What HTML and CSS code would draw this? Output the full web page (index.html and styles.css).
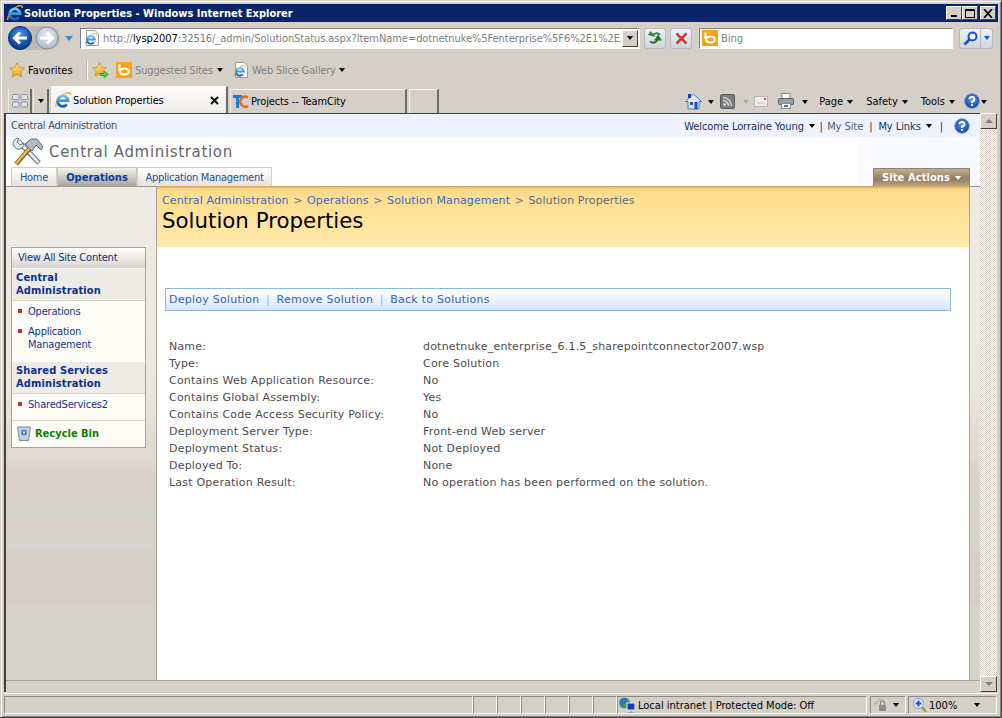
FILE: index.html
```html
<!DOCTYPE html>
<html lang="en">

<head>
    <meta charset="UTF-8">
    <title>Solution Properties - Windows Internet Explorer</title>
    <link rel="stylesheet" href="styles.css">
</head>

<body>
    <svg class="defs" width="0" height="0">
        <defs>
            <linearGradient id="ieBlue" x1="0" y1="0" x2="0" y2="1">
                <stop offset="0" stop-color="#6fc3f5" />
                <stop offset="1" stop-color="#0f62b8" />
            </linearGradient>
            <radialGradient id="backBlue" cx="0.5" cy="0.35" r="0.7">
                <stop offset="0" stop-color="#4f9be8" />
                <stop offset="0.55" stop-color="#1559b8" />
                <stop offset="1" stop-color="#0b2f78" />
            </radialGradient>
            <radialGradient id="foreGrey" cx="0.5" cy="0.35" r="0.7">
                <stop offset="0" stop-color="#e6edf6" />
                <stop offset="1" stop-color="#a8b4c6" />
            </radialGradient>
            <linearGradient id="starGold" x1="0" y1="0" x2="0" y2="1">
                <stop offset="0" stop-color="#ffe98a" />
                <stop offset="1" stop-color="#f0a41c" />
            </linearGradient>
            <radialGradient id="helpBlue" cx="0.5" cy="0.4" r="0.6">
                <stop offset="0" stop-color="#5c9cf0" />
                <stop offset="1" stop-color="#123f9c" />
            </radialGradient>
            <symbol id="ie" viewBox="0 0 16 16">
                <path d="M1 15C-.5 12 5 4 10 1.500 13 0 15.500 .5 15.500 3" fill="none" stroke="#f0a92c" stroke-width="1.300" />
                <path d="M2.500 8.700H13A5.200 5.200 0 1 0 11.800 12.500" fill="none" stroke="url(#ieBlue)" stroke-width="2.800" />
            </symbol>
            <symbol id="bing" viewBox="0 0 16 16">
                <rect width="16" height="16" fill="#f7a21b" />
                <ellipse cx="8.500" cy="9.500" rx="4.400" ry="3" fill="none" stroke="#fff" stroke-width="2.200" />
                <path d="M3.500 2.500V9" stroke="#fff" stroke-width="2.200" />
            </symbol>
            <symbol id="page" viewBox="0 0 16 16">
                <path d="M2.500 .5H11L14.500 4V15.500H2.500Z" fill="#fff" stroke="#9a9a9a" />
                <use href="#ie" x="1" y="3" width="12" height="12" />
            </symbol>
            <symbol id="star" viewBox="0 0 16 16">
                <path d="M8 .8L10.200 5.600 15.400 6.200 11.500 9.700 12.600 14.900 8 12.300 3.400 14.900 4.500 9.700 .6 6.200 5.800 5.600Z" fill="url(#starGold)" stroke="#c98a18" stroke-width=".8" />
            </symbol>
        </defs>
    </svg>

    <div class="window">
        <div class="titlebar">
            <svg class="title-icon"><use href="#ie" /></svg>
            <span class="title-text">Solution Properties - Windows Internet Explorer</span>
            <div class="win-buttons">
                <span class="win-btn"><i class="win-min"></i></span>
                <span class="win-btn"><i class="win-max"></i></span>
                <span class="win-btn win-close">
                    <svg width="10" height="9" viewBox="0 0 10 9"><path d="M1 0L9 9M9 0L1 9" stroke="#000" stroke-width="1.700" /></svg>
                </span>
            </div>
        </div>

        <div class="navrow">
            <div class="backfwd">
                <svg width="24" height="24" viewBox="0 0 24 24">
                    <circle cx="12" cy="12" r="11.500" fill="url(#backBlue)" stroke="#0b2f78" />
                    <path d="M19 12H7M12 6.500L6.500 12 12 17.500" fill="none" stroke="#fff" stroke-width="3" />
                </svg>
                <svg class="fwd" width="24" height="24" viewBox="0 0 24 24">
                    <circle cx="12" cy="12" r="11" fill="url(#foreGrey)" stroke="#8a8f98" />
                    <path d="M5 12H17M12 6.500L17.500 12 12 17.500" fill="none" stroke="#fff" stroke-width="3" />
                </svg>
            </div>
            <i class="nav-caret"></i>
            <div class="address">
                <svg class="addr-icon"><use href="#page" /></svg>
                <span class="addr-text">http://<b>lysp2007</b>:32516/_admin/SolutionStatus.aspx?ItemName=dotnetnuke%5Fenterprise%5F6%2E1%2E</span>
                <span class="addr-drop"><i class="caret"></i></span>
            </div>
            <span class="glass-btn refresh">
                <svg width="16" height="16" viewBox="0 0 16 16">
                    <path d="M13 5C10.500 2.500 7.500 3 5.500 5.500" fill="none" stroke="#2a8a2a" stroke-width="2" />
                    <path d="M1 5L8.500 7 3.500 1Z" fill="#2a8a2a" />
                    <path d="M3 11.500C6 13.500 9.500 13 10.500 9.500" fill="none" stroke="#1f7a1f" stroke-width="2" />
                    <path d="M7 10.500H15L11 4.500Z" fill="#1f7a1f" />
                </svg>
            </span>
            <span class="glass-btn stop">
                <svg width="13" height="13" viewBox="0 0 13 13"><path d="M1.500 1.500L11.500 11.500M11.500 1.500L1.500 11.500" stroke="#c4403c" stroke-width="2.600" /></svg>
            </span>
            <div class="search">
                <svg class="search-icon"><use href="#bing" /></svg>
                <span>Bing</span>
            </div>
            <div class="search-btn">
                <span class="search-go">
                    <svg width="15" height="15" viewBox="0 0 15 15">
                        <circle cx="9.500" cy="5.500" r="4" fill="#e8f2ff" stroke="#1d4fc4" stroke-width="2" />
                        <path d="M6.500 8.500L1.500 13.500" stroke="#1d4fc4" stroke-width="2.600" />
                    </svg>
                </span>
                <span class="search-drop"><i class="caret caret-blue"></i></span>
            </div>
        </div>

        <div class="favrow">
            <svg class="fav-star"><use href="#star" /></svg>
            <span class="fav-label">Favorites</span>
            <i class="fav-sep"></i>
            <svg class="fav-add" viewBox="0 0 17 17">
                <use href="#star" width="15" height="15" />
                <path d="M8 11.500H12V9L16.500 12.500 12 16V13.500H8Z" fill="#62c23c" stroke="#2c8a1c" stroke-width=".6" />
            </svg>
            <svg class="fav-bing"><use href="#bing" /></svg>
            <span class="fav-link fav-sites">Suggested Sites</span>
            <i class="caret caret-sites"></i>
            <svg class="fav-page"><use href="#page" /></svg>
            <span class="fav-link fav-slice">Web Slice Gallery</span>
            <i class="caret caret-slice"></i>
        </div>

        <div class="tabrow">
            <span class="tab-tool quick">
                <svg width="16" height="14" viewBox="0 0 16 14">
                    <rect x=".5" y=".5" width="6.500" height="5" rx="1" fill="#dfe4ee" stroke="#8a92a6" />
                    <rect x="9" y=".5" width="6.500" height="5" rx="1" fill="#dfe4ee" stroke="#8a92a6" />
                    <rect x=".5" y="8" width="6.500" height="5" rx="1" fill="#dfe4ee" stroke="#8a92a6" />
                    <rect x="9" y="8" width="6.500" height="5" rx="1" fill="#dfe4ee" stroke="#8a92a6" />
                </svg>
            </span>
            <span class="tab-tool tablist"><i class="caret"></i></span>
            <div class="tab tab-active">
                <svg class="tab-icon"><use href="#ie" /></svg>
                <span class="tab-title">Solution Properties</span>
                <svg class="tab-close" width="9" height="9" viewBox="0 0 9 9"><path d="M1 1L8 8M8 1L1 8" stroke="#000" stroke-width="2" /></svg>
            </div>
            <div class="tab tab-other">
                <svg class="tab-icon" viewBox="0 0 16 16">
                    <path d="M0 1H9V4H6V14H3V4H0Z" fill="#1a7fd8" />
                    <path d="M15 3.500A5 5 0 1 0 15 12" fill="none" stroke="#f0642c" stroke-width="2.600" />
                </svg>
                <span class="tab-title">Projects -- TeamCity</span>
            </div>
            <div class="tab tab-new"></div>
            <div class="tools">
                <svg class="tool-home" viewBox="0 0 17 17">
                    <path d="M8.500 1L16.500 8.500H14V16H3V8.500H.5Z" fill="#dbe7f7" stroke="#4d77b8" />
                    <rect x="3" y="1" width="3" height="4" fill="#1c3fa8" />
                    <rect x="9.500" y="9" width="3" height="7" fill="#1c50a8" />
                    <rect x="5" y="9" width="3" height="3" fill="#33507c" />
                </svg>
                <i class="caret caret-home"></i>
                <svg class="tool-rss" viewBox="0 0 15 15">
                    <rect x=".5" y=".5" width="14" height="14" rx="1.500" fill="#7a7a7a" stroke="#5c5c5c" />
                    <circle cx="4.500" cy="10.500" r="1.500" fill="#d8d8d8" />
                    <path d="M3 6.500A5.500 5.500 0 0 1 8.500 12M3 3.500A8.500 8.500 0 0 1 11.500 12" fill="none" stroke="#d8d8d8" stroke-width="1.500" />
                </svg>
                <i class="caret caret-rss"></i>
                <svg class="tool-mail" viewBox="0 0 14 11">
                    <rect x=".5" y=".5" width="13" height="10" fill="#f0eeea" stroke="#b5b5b5" />
                    <path d="M3 7H10" stroke="#b8b8b8" />
                    <rect x="10" y="2" width="2" height="2" fill="#d84848" />
                </svg>
                <svg class="tool-print" viewBox="0 0 16 16">
                    <rect x="4" y=".5" width="8" height="5" fill="#fff" stroke="#8a8a8a" />
                    <rect x=".5" y="5.500" width="15" height="6" rx="1" fill="#9aa0a6" stroke="#5c6066" />
                    <rect x="3.500" y="10.500" width="9" height="5" fill="#fff" stroke="#8a8a8a" />
                    <rect x="6" y="12" width="4" height="2" fill="#2a8a9c" />
                </svg>
                <i class="caret caret-print"></i>
                <span class="tool-label label-page">Page</span><i class="caret"></i>
                <span class="tool-label label-safety">Safety</span><i class="caret"></i>
                <span class="tool-label label-tools">Tools</span><i class="caret"></i>
                <svg class="tool-help" viewBox="0 0 16 16">
                    <circle cx="8" cy="8" r="7.500" fill="url(#helpBlue)" stroke="#8ca4cc" />
                    <path d="M5.500 6A2.500 2.300 0 1 1 8 8.500V10" fill="none" stroke="#fff" stroke-width="1.800" />
                    <rect x="7" y="11" width="2" height="2" fill="#fff" />
                </svg>
                <i class="caret caret-help"></i>
            </div>
        </div>

        <div class="main">
            <div class="frame">
                <div class="page">
                    <div class="globalbar">
                        <span class="site-name">Central Administration</span>
                        <div class="global-links">
                            <span>Welcome Lorraine Young</span><i class="caret caret-welcome"></i>
                            <span class="bar bar-a">|</span>
                            <span class="mysite">My Site</span>
                            <span class="bar bar-b">|</span>
                            <span>My Links</span><i class="caret caret-welcome"></i>
                            <span class="bar bar-c">|</span>
                            <svg class="global-help" viewBox="0 0 16 16">
                                <circle cx="8" cy="8" r="7.200" fill="url(#helpBlue)" stroke="#5a8ad8" />
                                <path d="M5.500 6A2.500 2.300 0 1 1 8 8.500V10" fill="none" stroke="#fff" stroke-width="1.800" />
                                <rect x="7" y="11" width="2" height="2" fill="#fff" />
                            </svg>
                        </div>
                    </div>

                    <div class="header">
                        <div class="header-top">
                            <svg class="logo" viewBox="0 0 32 28">
                                <path d="M6 3L27 25" stroke="#6d7480" stroke-width="5" />
                                <path d="M6.500 3L26.500 24.500" stroke="#f0f2f5" stroke-width="2.600" />
                                <path d="M1 7A6 6 0 0 1 7 0L5 4 8 7 12 5A6 6 0 0 1 4.500 11Z" fill="#e2e6ea" stroke="#6d7480" />
                                <path d="M4 26L19 9" stroke="#8a6a20" stroke-width="4.600" />
                                <path d="M4 25.500L18.500 9" stroke="#e0bc5c" stroke-width="2.400" />
                                <path d="M13 6L19 1H25L31 9 29 12 24 7 20 13Z" fill="#b4bac2" stroke="#626a74" />
                            </svg>
                            <span class="site-title">Central Administration</span>
                        </div>
                        <div class="header-tabs">
                            <div class="topnav">
                                <span class="topnav-tab nav-home">Home</span>
                                <span class="topnav-tab topnav-on">Operations</span>
                                <span class="topnav-tab nav-app">Application Management</span>
                            </div>
                            <span class="site-actions">Site Actions<i class="caret caret-white"></i></span>
                        </div>
                    </div>

                    <div class="body-row">
                        <aside class="sidebar">
                            <div class="quicklaunch">
                                <div class="ql-all">View All Site Content</div>
                                <div class="ql-head">Central<br>Administration</div>
                                <ul class="ql-list ql-list-first">
                                    <li>Operations</li>
                                    <li>Application<br>Management</li>
                                </ul>
                                <div class="ql-head">Shared Services<br>Administration</div>
                                <ul class="ql-list ql-list-second">
                                    <li>SharedServices2</li>
                                </ul>
                                <div class="ql-bin">
                                    <svg width="14" height="15" viewBox="0 0 14 15">
                                        <path d="M.5 1H13.500L11.500 14.500H2.500Z" fill="#c4d2e0" stroke="#7c8a98" />
                                        <rect x="4.500" y="4" width="5" height="5" fill="#3a6cc0" />
                                        <rect x="6" y="5.500" width="2" height="2" fill="#fff" />
                                    </svg>
                                    <span>Recycle Bin</span>
                                </div>
                            </div>
                        </aside>

                        <div class="content">
                            <div class="titlearea">
                                <div class="breadcrumb">
                                    <span>Central Administration</span><em>&gt;</em><span>Operations</span><em>&gt;</em><span>Solution Management</span><em>&gt;</em><span class="crumb-current">Solution Properties</span>
                                </div>
                                <h1>Solution Properties</h1>
                            </div>
                            <div class="actions">
                                <span>Deploy Solution</span><em>|</em><span>Remove Solution</span><em>|</em><span>Back to Solutions</span>
                            </div>
                            <dl class="props">
                                <dt>Name:</dt><dd>dotnetnuke_enterprise_6.1.5_sharepointconnector2007.wsp</dd>
                                <dt>Type:</dt><dd>Core Solution</dd>
                                <dt>Contains Web Application Resource:</dt><dd>No</dd>
                                <dt>Contains Global Assembly:</dt><dd>Yes</dd>
                                <dt>Contains Code Access Security Policy:</dt><dd>No</dd>
                                <dt>Deployment Server Type:</dt><dd>Front-end Web server</dd>
                                <dt>Deployment Status:</dt><dd>Not Deployed</dd>
                                <dt>Deployed To:</dt><dd>None</dd>
                                <dt>Last Operation Result:</dt><dd>No operation has been performed on the solution.</dd>
                            </dl>
                        </div>
                        <div class="rightgutter"></div>
                    </div>
                </div>
            </div>
            <div class="scrollbar">
                <span class="scroll-btn"><i class="scroll-up"></i></span>
                <span class="scroll-btn"><i class="scroll-down"></i></span>
            </div>
        </div>

        <div class="statusbar">
            <span class="cell cell-main"></span>
            <span class="cell cell-small"></span>
            <span class="cell cell-small"></span>
            <span class="cell cell-small"></span>
            <span class="cell cell-small"></span>
            <span class="cell cell-small"></span>
            <span class="cell cell-small"></span>
            <span class="cell cell-zone">
                <svg width="18" height="16" viewBox="0 0 18 16">
                    <circle cx="6.500" cy="6" r="5.500" fill="#3f9c58" />
                    <path d="M3 2L8 1 10 5 6 7 5 10 2 7Z" fill="#2a78c8" />
                    <rect x="9" y="6" width="8" height="7" fill="#1c3fa8" stroke="#dfe6f2" />
                    <path d="M13 13V15M10 15.500H16" stroke="#9aa4b4" />
                </svg>
                <span>Local intranet | Protected Mode: Off</span>
            </span>
            <span class="cell cell-lock">
                <svg width="16" height="16" viewBox="0 0 16 16">
                    <path d="M1 8L7 2 9 4" fill="none" stroke="#b8b8b8" stroke-width="2" />
                    <rect x="6" y="8" width="7" height="6" fill="#8c8c8c" />
                    <path d="M7.500 8V6A2 2 0 0 1 11.500 6V8" fill="none" stroke="#8c8c8c" stroke-width="1.300" />
                </svg>
                <i class="caret caret-lock"></i>
            </span>
            <span class="cell cell-zoom">
                <svg width="14" height="15" viewBox="0 0 14 15">
                    <circle cx="5.500" cy="5.500" r="5" fill="#e6f0fc" stroke="#7a9cc8" />
                    <path d="M2.500 5.500H8.500M5.500 2.500V8.500" stroke="#1c50c8" stroke-width="2" />
                    <path d="M9 9L13 14" stroke="#b08a50" stroke-width="2.200" />
                </svg>
                <span>100%</span>
                <i class="caret caret-zoom"></i>
            </span>
        </div>
    </div>
</body>

</html>
```

FILE: styles.css
```css
* {
    box-sizing: border-box;
}

html,
body {
    margin: 0;
    padding: 0;
    overflow: hidden;
}

body {
    width: 1002px;
    height: 718px;
    font-family: "DejaVu Sans", Verdana, sans-serif;
    font-size: 11px;
}

.defs {
    position: absolute;
}

i,
em {
    font-style: normal;
}

.window {
    width: 1002px;
    height: 718px;
    padding: 4px 4px 3px;
    background-color: #d4d0c8;
    box-shadow: inset -1px -1px 0 #404040, inset 1px 1px 0 #d4d0c8, inset 2px 2px 0 #fff, inset -2px -2px 0 #808080;
    display: flex;
    flex-direction: column;
    font-stretch: condensed;
    color: #000;
}

.caret {
    display: inline-block;
    flex: none;
    width: 0;
    height: 0;
    border-left: 3.5px solid transparent;
    border-right: 3.5px solid transparent;
    border-top: 4px solid #000;
}

/* title bar */
.titlebar {
    height: 18px;
    background-color: #0a246a;
    display: flex;
    align-items: center;
    color: #fff;
    flex: none;
}

.title-icon {
    width: 16px;
    height: 16px;
    margin-left: 3px;
}

.title-text {
    margin-left: 1px;
    font-weight: bold;
    font-size: 11px;
}

.win-buttons {
    margin-left: auto;
    margin-right: 2px;
    display: flex;
}

.win-btn {
    width: 16px;
    height: 14px;
    background-color: #d4d0c8;
    border: 1px solid;
    border-color: #fff #404040 #404040 #fff;
    display: flex;
    align-items: center;
    justify-content: center;
}

.win-close {
    margin-left: 2px;
}

.win-min {
    width: 6px;
    height: 2px;
    background-color: #000;
    margin-top: 6px;
}

.win-max {
    width: 10px;
    height: 9px;
    border: 1px solid #000;
    border-top-width: 2px;
}

/* navigation row */
.navrow {
    height: 28px;
    margin-top: 2px;
    display: flex;
    align-items: center;
    flex: none;
}

.backfwd {
    display: flex;
    margin-left: 4px;
    height: 24px;
    background-color: #bdbab4;
    border-radius: 12px;
    width: 52px;
}

.fwd {
    margin-left: 3px;
}

.nav-caret {
    width: 0;
    height: 0;
    margin-left: 5px;
    border-left: 4px solid transparent;
    border-right: 4px solid transparent;
    border-top: 5px solid #3f8ac4;
}

.address {
    width: 560px;
    height: 21px;
    margin-left: 7px;
    background-color: #fff;
    border: 1px solid;
    border-color: #808080 #fff #fff #808080;
    display: flex;
    align-items: center;
}

.addr-icon {
    width: 16px;
    height: 16px;
    margin-left: 3px;
    flex: none;
}

.addr-text {
    margin-left: 3px;
    color: #808080;
    white-space: nowrap;
    flex: 1;
    letter-spacing: -0.06px;
}

.addr-text b {
    font-weight: normal;
    color: #000;
}

.addr-drop {
    width: 16px;
    height: 17px;
    flex: none;
    margin-right: 1px;
    background-color: #d4d0c8;
    border: 1px solid;
    border-color: #fff #404040 #404040 #fff;
    display: flex;
    align-items: center;
    justify-content: center;
}

.glass-btn {
    width: 22px;
    height: 21px;
    background: linear-gradient(#f0f2f6, #cfd5de);
    border: 1px solid #b4b8c0;
    border-radius: 3px;
    display: flex;
    align-items: center;
    justify-content: center;
}

.refresh {
    margin-left: 4px;
}

.stop {
    margin-left: 4px;
}

.search {
    width: 254px;
    height: 21px;
    margin-left: 7px;
    background-color: #fff;
    border: 1px solid;
    border-color: #808080 #fff #fff #808080;
    display: flex;
    align-items: center;
    color: #808080;
}

.search-icon {
    width: 16px;
    height: 16px;
    margin-left: 2px;
    margin-right: 3px;
}

.search-btn {
    width: 34px;
    height: 21px;
    margin-left: 6px;
    display: flex;
    background: linear-gradient(#eef2f8, #cfd5de);
    border: 1px solid #b4b8c0;
    border-radius: 3px;
}

.search-go {
    width: 21px;
    display: flex;
    align-items: center;
    justify-content: center;
    border-right: 1px solid #b4b8c0;
}

.search-drop {
    flex: 1;
    display: flex;
    align-items: center;
    justify-content: center;
}

.caret-blue {
    border-top-color: #1d4fc4;
}

/* favorites row */
.favrow {
    height: 24px;
    margin-top: 6px;
    display: flex;
    align-items: center;
    flex: none;
}

.fav-star {
    width: 16px;
    height: 16px;
    margin-left: 5px;
}

.fav-label {
    margin-left: 3px;
    width: 46px;
}

.fav-sep {
    width: 2px;
    height: 20px;
    margin-left: 12px;
    background-color: #b4b0a8;
    border-right: 1px solid #fff;
}

.fav-add {
    width: 17px;
    height: 17px;
    margin-left: 4px;
}

.fav-bing {
    width: 16px;
    height: 16px;
    margin-left: 7px;
}

.fav-link {
    color: #808080;
    margin-left: 3px;
    white-space: nowrap;
    margin-top: 1px;
    letter-spacing: -0.15px;
}

.fav-sites {
    width: 77px;
}

.caret-sites {
    margin-left: 5px;
}

.fav-page {
    width: 16px;
    height: 16px;
    margin-left: 10px;
}

.fav-slice {
    width: 84px;
}

.caret-slice {
    margin-left: 3px;
}

/* tab row */
.tabrow {
    height: 27px;
    margin-top: 4px;
    display: flex;
    align-items: flex-end;
    flex: none;
}

.tab-tool {
    height: 24px;
    border-right: 2px solid #6c6a66;
    border-left: 1px solid #eceae4;
    display: flex;
    align-items: center;
    justify-content: center;
}

.quick {
    width: 24px;
    margin-left: 4px;
}

.tablist {
    width: 16px;
    margin-left: 1px;
}

.tab {
    height: 24px;
    border-right: 2px solid #6c6a66;
    border-left: 1px solid #f2f1ec;
    border-top: 1px solid #f2f1ec;
    display: flex;
    align-items: center;
}

.tab-active {
    width: 177px;
    height: 27px;
    margin-left: 2px;
    background: linear-gradient(#fbfbfa, #eeece8);
    border-top-color: #fff;
}

.tab-other {
    width: 177px;
    margin-left: 2px;
}

.tab-new {
    width: 30px;
    margin-left: 2px;
}

.tab-icon {
    width: 16px;
    height: 16px;
    margin-left: 3px;
    flex: none;
}

.tab-other .tab-icon {
    margin-left: 2px;
}

.tab-title {
    margin-left: 2px;
    letter-spacing: -0.15px;
}

.tab-close {
    margin-left: auto;
    margin-right: 7px;
}

.tools {
    margin-left: auto;
    margin-right: 11px;
    height: 24px;
    display: flex;
    align-items: center;
}

.tools .caret {
    margin-left: 4px;
    margin-top: 1px;
}

.tool-home {
    width: 17px;
    height: 17px;
}

.tools .caret-home {
    margin-left: 6px;
}

.tool-rss {
    width: 15px;
    height: 15px;
    margin-left: 6px;
}

.tools .caret-rss {
    margin-left: 8px;
    border-top-color: #a8a8a8;
}

.tool-mail {
    width: 14px;
    height: 11px;
    margin-left: 5px;
}

.tool-print {
    width: 16px;
    height: 16px;
    margin-left: 10px;
}

.tools .caret-print {
    margin-left: 8px;
}

.tool-label {
    margin-left: 13px;
}

.label-page {
    margin-left: 11px;
}

.tool-help {
    width: 16px;
    height: 16px;
    margin-left: 9px;
}

.tools .caret-help {
    margin-left: 1px;
}

/* main area */
.main {
    display: flex;
    height: 579px;
    flex: none;
    border-left: 2px solid #404040;
    background-color: #d6d3c8;
}

.frame {
    width: 974px;
    height: 568px;
    border-top: 1px solid #404040;
    background-color: #fff;
}

.page {
    height: 100%;
    display: flex;
    flex-direction: column;
    color: #333;
}

.globalbar {
    height: 23px;
    background-color: #edf2fe;
    display: flex;
    align-items: center;
    padding: 0 10px 0 5px;
    flex: none;
    color: #4c4c4c;
}

.site-name {
    letter-spacing: -0.25px;
}

.global-links {
    margin-left: auto;
    padding-top: 1px;
    display: flex;
    align-items: center;
    color: #18305c;
    letter-spacing: -0.08px;
}

.caret-welcome {
    margin-left: 5px;
}

.bar {
    color: #333;
}

.bar-a {
    margin: 0 4.500px;
}

.bar-b {
    margin: 0 6px;
}

.bar-c {
    margin: 0 8px;
}

.mysite {
    color: #56606e;
}

.global-help {
    width: 16px;
    height: 16px;
    margin-left: 3px;
}

.header {
    height: 49px;
    flex: none;
    background: linear-gradient(to right, #fff 853px, #fdfaff 853px, #fdfaff 867px, #f5f8ff 867px);
    display: flex;
    flex-direction: column;
}

.header-top {
    height: 30px;
    display: flex;
    align-items: center;
    padding-left: 6px;
}

.logo {
    width: 32px;
    height: 28px;
}

.site-title {
    margin-left: 5px;
    font-size: 15px;
    font-stretch: normal;
    color: #666;
    letter-spacing: 0.67px;
}

.header-tabs {
    flex: 1;
    display: flex;
    align-items: flex-end;
    padding-left: 5px;
}

.topnav {
    display: flex;
}

.topnav-tab {
    height: 19px;
    background: linear-gradient(#fff, #e6e2da);
    border: 1px solid #d4d0c6;
    border-bottom: none;
    color: #274f9c;
    display: flex;
    align-items: center;
    justify-content: center;
    letter-spacing: -0.25px;
}

.nav-home {
    width: 46px;
}

.nav-app {
    width: 135px;
}

.topnav-on {
    width: 80px;
    font-weight: bold;
    letter-spacing: 0;
    background: linear-gradient(#f4f2ee, #aaa69e);
    border-color: #c8c4ba;
    color: #0a3c9c;
}

.site-actions {
    margin-left: auto;
    margin-right: 10px;
    width: 97px;
    height: 18px;
    background: linear-gradient(#c3ae8e 0, #947c5c 60%, #b8a68a 100%);
    border: 1px solid #8a8478;
    border-bottom: none;
    color: #fff;
    font-weight: bold;
    letter-spacing: 0.1px;
    display: flex;
    align-items: center;
    justify-content: center;
}

.caret-white {
    margin-left: 5px;
    border-top-color: #fff;
}

.body-row {
    flex: 1;
    display: flex;
    border-bottom: 1px solid #a8a398;
}

.sidebar,
.rightgutter {
    border-top: 1px solid #a09a8e;
    background: linear-gradient(#eeebe6 0, #ebe7e2 200px, #dfdbd0 255px, #dfdbd0 270px, #dcd3cf 282px, #dcd3cf 310px, #d6d4cf 311px, #d6d4cf 332px, #dcd3cf 333px, #dcd3cf 340px, #d6d4cf 341px, #d6d4cf 358px, #d6cfc6 370px, #d6cfc6 418px, #d6d3c8 419px);
}

.sidebar {
    width: 151px;
    flex: none;
    border-right: 1px solid #a8a398;
    padding: 60px 0 0 5px;
}

.quicklaunch {
    width: 135px;
    border: 1px solid #a8a398;
    background-color: #fefcf6;
}

.ql-all {
    height: 20px;
    padding: 3px 0 0 6px;
    background: linear-gradient(#fff, #d9d5cc);
    color: #0f2f78;
    letter-spacing: -0.2px;
}

.ql-head {
    padding: 2px 4px 3px 4px;
    height: 33px;
    line-height: 13px;
    background-color: #edebe6;
    border-top: 1px solid #fff;
    border-bottom: 1px solid #d6d2c6;
    font-weight: bold;
    color: #0a3090;
    letter-spacing: 0.14px;
}

.ql-list {
    list-style: none;
    margin: 0;
    padding: 1px 0 0 16px;
    line-height: 13px;
    color: #0f3596;
    letter-spacing: -0.2px;
}

.ql-list-first {
    height: 60px;
}

.ql-list-second {
    height: 27px;
    border-bottom: 1px solid #d6d2c6;
}

.ql-list li {
    position: relative;
    margin-top: 3px;
    margin-bottom: 7px;
}

.ql-list li::before {
    content: "";
    position: absolute;
    left: -10px;
    top: 4px;
    width: 4px;
    height: 4px;
    background-color: #c0341c;
}

.ql-bin {
    height: 26px;
    display: flex;
    align-items: center;
    padding: 0 0 2px 5px;
    color: #0a8000;
    font-weight: bold;
}

.ql-bin span {
    margin-left: 4px;
}

.content {
    width: 812px;
    flex: none;
    display: flex;
    flex-direction: column;
    font-stretch: normal;
    letter-spacing: 0.2px;
    color: #4c4c4c;
}

.titlearea {
    height: 61px;
    padding: 8px 0 0 5px;
    background: linear-gradient(#c8a262 0, #fbd680 3px, #ffdc8c 10%, #ffe49c 60%, #fee8ac 100%);
}

.breadcrumb {
    color: #3a68c8;
    line-height: 14px;
    letter-spacing: 0.12px;
}

.breadcrumb em {
    margin: 0 4.500px;
    color: #5f6f90;
}

.crumb-current {
    color: #5a6a80;
}

h1 {
    margin: 0;
    font-size: 21.330px;
    font-weight: normal;
    line-height: 25px;
    letter-spacing: 0;
    color: #000;
}

.actions {
    height: 23px;
    width: 786px;
    margin: 41px 0 0 8px;
    padding-left: 3px;
    background: linear-gradient(#fff, #d9e7fb);
    border: 1px solid #8fb4e8;
    display: flex;
    align-items: center;
    color: #3a62b4;
    letter-spacing: 0.25px;
}

.actions em {
    margin: 0 6.500px;
    color: #8fb4e8;
}

.props {
    margin: 27px 0 0 12px;
    display: grid;
    grid-template-columns: 254px 1fr;
    grid-auto-rows: 17px;
    align-items: center;
}

.props dt,
.props dd {
    margin: 0;
}

.rightgutter {
    flex: 1;
    border-left: 1px solid #a8a398;
}

/* scrollbar */
.scrollbar {
    width: 17px;
    height: 579px;
    display: flex;
    flex-direction: column;
    justify-content: space-between;
    background-image: repeating-conic-gradient(#d4d0c8 0 25%, #fff 0 50%);
    background-size: 2px 2px;
}

.scroll-btn {
    width: 17px;
    height: 16px;
    background-color: #d4d0c8;
    border: 1px solid;
    border-color: #fff #404040 #404040 #fff;
    display: flex;
    align-items: center;
    justify-content: center;
}

.scroll-up {
    border-left: 4px solid transparent;
    border-right: 4px solid transparent;
    border-bottom: 4px solid #808080;
}

.scroll-down {
    border-left: 4px solid transparent;
    border-right: 4px solid transparent;
    border-top: 4px solid #808080;
}

/* status bar */
.statusbar {
    height: 22px;
    margin-top: 1px;
    display: flex;
    border-top: 1px solid #f4f3ee;
    padding-top: 2px;
    flex: none;
}

.cell {
    height: 18px;
    border: 1px solid;
    border-color: #8c8a84 #fff #fff #8c8a84;
    display: flex;
    align-items: center;
    flex: none;
}

.cell-main {
    width: 469px;
}

.cell-small {
    width: 24px;
}

.cell-zone {
    width: 250px;
}

.cell-zone span {
    margin-left: 2px;
}

.cell-lock {
    width: 36px;
    margin-left: 3px;
    padding-left: 2px;
}

.caret-lock {
    margin-left: 4px;
}

.cell-zoom {
    width: 89px;
    margin-left: 2px;
    padding-left: 4px;
}

.cell-zoom span {
    margin-left: 2px;
}

.caret-zoom {
    margin-left: 17px;
}
```
